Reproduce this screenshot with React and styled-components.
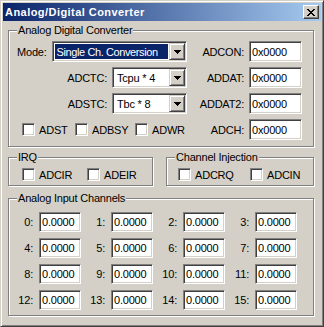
import React from 'react';
import styled, { createGlobalStyle } from 'styled-components';

const GlobalStyle = createGlobalStyle`
  html, body {
    margin: 0;
    padding: 0;
    background: #d4d0c8;
  }
  body {
    font-family: "Liberation Sans", Arial, sans-serif;
    font-size: 11px;
    letter-spacing: -0.2px;
    color: #000;
  }
`;

const Window = styled.div`
  width: 324px;
  height: 327px;
  box-sizing: border-box;
  background: #d4d0c8;
  border: 1px solid;
  border-color: #d4d0c8 #404040 #404040 #d4d0c8;
  box-shadow: inset 1px 1px #fff, inset -1px -1px #808080;
  padding: 2px;
  display: flex;
  flex-direction: column;
`;

const TitleBar = styled.div`
  height: 18px;
  flex-shrink: 0;
  display: flex;
  align-items: center;
  justify-content: space-between;
  padding: 0 2px;
  background: linear-gradient(to right, #0a246a, #a6caf0);
  color: #fff;
  font-weight: bold;
  font-size: 11px;
  letter-spacing: 0.45px;
`;

const CloseButton = styled.div`
  width: 16px;
  height: 14px;
  box-sizing: border-box;
  background: #d4d0c8;
  border: 1px solid;
  border-color: #fff #404040 #404040 #fff;
  box-shadow: inset -1px -1px #808080;
  display: flex;
  align-items: center;
  justify-content: center;
`;

const Body = styled.div`
  padding: 0 7px 0 5px;
  display: flex;
  flex-direction: column;
`;

const Group = styled.div`
  position: relative;
  box-sizing: border-box;
  border: 1px solid #808080;
  box-shadow: inset 1px 1px #fff, 1px 1px #fff;
  margin-top: ${p => p.$mt}px;
  height: ${p => p.$h}px;
  width: ${p => (p.$w ? `${p.$w}px` : 'auto')};
  padding: ${p => p.$pad};
`;

const Legend = styled.span`
  position: absolute;
  top: -7px;
  left: 8px;
  padding: 0 1px;
  line-height: 13px;
  background: #d4d0c8;
`;

const Row = styled.div`
  display: flex;
  align-items: center;
  height: 21px;
  margin-bottom: 5px;
`;

const LeftPart = styled.div`
  width: 170px;
  display: flex;
  align-items: center;
`;

const FieldLabel = styled.span`
  flex: 1;
  text-align: ${p => (p.$left ? 'left' : 'right')};
  padding-right: 5px;
  white-space: nowrap;
`;

const RightLabel = styled.span`
  width: 57px;
  text-align: right;
  padding-right: 5px;
  white-space: nowrap;
`;

const sunken = `
  box-sizing: border-box;
  background: #fff;
  border: 1px solid;
  border-color: #808080 #fff #fff #808080;
  box-shadow: inset 1px 1px #404040, inset -1px -1px #d4d0c8;
`;

const Edit = styled.input`
  ${sunken}
  width: ${p => p.$w}px;
  height: ${p => p.$h || 21}px;
  margin: 0;
  padding: 0 0 0 2px;
  font: inherit;
  letter-spacing: inherit;
  color: #000;
  outline: none;
`;

const Combo = styled.div`
  ${sunken}
  width: ${p => p.$w}px;
  height: 21px;
  display: flex;
  padding: 1px;
`;

const ComboText = styled.div`
  flex: 1;
  margin: 1px;
  padding-left: 2px;
  display: flex;
  align-items: center;
  white-space: nowrap;
  overflow: hidden;
  letter-spacing: ${p => (p.$selected ? '-0.4px' : 'inherit')};
  background: ${p => (p.$selected ? '#0a246a' : '#fff')};
  color: ${p => (p.$selected ? '#fff' : '#000')};
`;

const DropButton = styled.div`
  width: 16px;
  height: 17px;
  box-sizing: border-box;
  background: #d4d0c8;
  border: 1px solid;
  border-color: #d4d0c8 #404040 #404040 #d4d0c8;
  box-shadow: inset 1px 1px #fff, inset -1px -1px #808080;
  display: flex;
  align-items: center;
  justify-content: center;
`;

const CheckRow = styled.div`
  display: flex;
  align-items: center;
  padding-left: ${p => p.$pl}px;
`;

const Check = styled.label`
  display: inline-flex;
  align-items: center;
  gap: 4px;
  width: ${p => p.$w}px;
  white-space: nowrap;
`;

const Box = styled.span`
  ${sunken}
  width: 13px;
  height: 13px;
  flex-shrink: 0;
`;

const Pair = styled.div`
  display: flex;
  justify-content: space-between;
`;

const ChannelGrid = styled.div`
  display: grid;
  grid-template-columns: repeat(4, 72px);
  row-gap: 6px;
`;

const Channel = styled.div`
  display: grid;
  grid-template-columns: 24px 42px;
  column-gap: 6px;
  align-items: center;
`;

const ChannelLabel = styled.span`
  text-align: right;
`;

const Arrow = () => (
  <svg width="7" height="4" viewBox="0 0 7 4" shapeRendering="crispEdges">
    <path d="M0 0h7v1H0zM1 1h5v1H1zM2 2h3v1H2zM3 3h1v1H3z" fill="#000" />
  </svg>
);

const CloseGlyph = () => (
  <svg width="8" height="7" viewBox="0 0 8 7" shapeRendering="crispEdges">
    <path
      d="M0 0h2v1H0zM6 0h2v1H6zM1 1h2v1H1zM5 1h2v1H5zM2 2h4v1H2zM3 3h2v1H3zM2 4h4v1H2zM1 5h2v1H1zM5 5h2v1H5zM0 6h2v1H0zM6 6h2v1H6z"
      fill="#000"
    />
  </svg>
);

const Select = ({ width, value, selected }) => (
  <Combo $w={width}>
    <ComboText $selected={selected}>{value}</ComboText>
    <DropButton>
      <Arrow />
    </DropButton>
  </Combo>
);

const CheckBox = ({ label, width }) => (
  <Check $w={width}>
    <Box />
    {label}
  </Check>
);

const Register = ({ label }) => (
  <>
    <RightLabel>{label}</RightLabel>
    <Edit $w={53} readOnly value="0x0000" />
  </>
);

const channels = Array.from({ length: 16 }, (_, i) => i);

export default function App() {
  return (
    <>
      <GlobalStyle />
      <Window>
        <TitleBar>
          <span>Analog/Digital Converter</span>
          <CloseButton>
            <CloseGlyph />
          </CloseButton>
        </TitleBar>
        <Body>
          <Group $mt={9} $h={117} $pad="10px 0 0 8px">
            <Legend>Analog Digital Converter</Legend>
            <Row>
              <LeftPart>
                <FieldLabel $left>Mode:</FieldLabel>
                <Select width={136} value="Single Ch. Conversion" selected />
              </LeftPart>
              <Register label="ADCON:" />
            </Row>
            <Row>
              <LeftPart>
                <FieldLabel>ADCTC:</FieldLabel>
                <Select width={75} value="Tcpu * 4" />
              </LeftPart>
              <Register label="ADDAT:" />
            </Row>
            <Row>
              <LeftPart>
                <FieldLabel>ADSTC:</FieldLabel>
                <Select width={75} value="Tbc * 8" />
              </LeftPart>
              <Register label="ADDAT2:" />
            </Row>
            <Row>
              <LeftPart>
                <CheckRow $pl={5}>
                  <CheckBox label="ADST" width={53} />
                  <CheckBox label="ADBSY" width={60} />
                  <CheckBox label="ADWR" width={52} />
                </CheckRow>
              </LeftPart>
              <Register label="ADCH:" />
            </Row>
          </Group>

          <Pair>
            <Group $mt={10} $h={29} $w={145} $pad="10px 0 0 13px">
              <Legend>IRQ</Legend>
              <CheckRow $pl={0}>
                <CheckBox label="ADCIR" width={65} />
                <CheckBox label="ADEIR" width={60} />
              </CheckRow>
            </Group>
            <Group $mt={10} $h={29} $w={148} $pad="10px 0 0 11px">
              <Legend>Channel Injection</Legend>
              <CheckRow $pl={0}>
                <CheckBox label="ADCRQ" width={72} />
                <CheckBox label="ADCIN" width={60} />
              </CheckRow>
            </Group>
          </Pair>

          <Group $mt={12} $h={118} $pad="13px 0 0 0">
            <Legend>Analog Input Channels</Legend>
            <ChannelGrid>
              {channels.map(n => (
                <Channel key={n}>
                  <ChannelLabel>{n}:</ChannelLabel>
                  <Edit $w={42} $h={20} readOnly value="0.0000" />
                </Channel>
              ))}
            </ChannelGrid>
          </Group>
        </Body>
      </Window>
    </>
  );
}
